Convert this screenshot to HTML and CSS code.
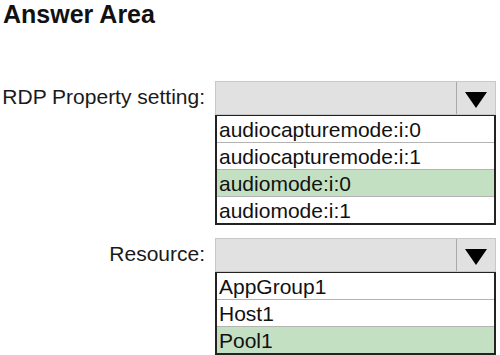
FILE: index.html
```html
<!DOCTYPE html>
<html lang="en">
  <head>
    <meta charset="UTF-8" />
    <title>Answer Area</title>
    <link rel="stylesheet" href="styles.css">
  </head>
  <body>
    <h2 class="title">Answer Area</h2>

    <div class="form">
      <!-- RDP property -->
      <div class="label">RDP Property setting:</div>
      <div class="picker">
        <div class="select">
          <span class="value"></span>
          <span class="arrow">
            <svg width="22" height="16" viewBox="0 0 22 16"><polygon points="0,0 22,0 11,16" fill="#000" /></svg>
          </span>
        </div>
        <ul class="options">
          <li>audiocapturemode:i:0</li>
          <li>audiocapturemode:i:1</li>
          <li class="picked">audiomode:i:0</li>
          <li>audiomode:i:1</li>
        </ul>
      </div>

      <!-- Resource -->
      <div class="label">Resource:</div>
      <div class="picker">
        <div class="select">
          <span class="value"></span>
          <span class="arrow">
            <svg width="22" height="16" viewBox="0 0 22 16"><polygon points="0,0 22,0 11,16" fill="#000" /></svg>
          </span>
        </div>
        <ul class="options">
          <li>AppGroup1</li>
          <li>Host1</li>
          <li class="picked">Pool1</li>
        </ul>
      </div>
    </div>
  </body>
</html>
```

FILE: styles.css
```css
body {
  margin: 0;
  font-family: "Liberation Sans", Arial, sans-serif;
  color: #111;
  background: #fff;
}
.title {
  margin: 0;
  padding-left: 3px;
  font-size: 25px;
  font-weight: bold;
  line-height: 29px;
}
.form {
  display: grid;
  grid-template-columns: 205px 281px;
  column-gap: 10px;
  row-gap: 13px;
  margin-top: 52px;
}
.label {
  text-align: right;
  font-size: 21px;
  line-height: 31px;
  color: #1a1a1a;
}
.select {
  display: flex;
  height: 34px;
  box-sizing: border-box;
  background: #e1e1e1;
  border: 1px solid #c8c8c8;
}
.value {
  flex: 1;
}
.arrow {
  width: 39px;
  border-left: 1px solid #a9a9a9;
  display: flex;
  justify-content: center;
  padding-top: 10px;
  box-sizing: border-box;
}
.options {
  list-style: none;
  margin: 0;
  padding: 0;
  border: 2px solid #222;
  border-top-width: 1px;
}
.options li {
  height: 26px;
  padding: 2px 0 0 2px;
  box-sizing: border-box;
  font-size: 21px;
  line-height: 24px;
  color: #111;
  white-space: nowrap;
}
.options li + li {
  height: 27px;
  border-top: 1px solid #b4b4b4;
}
.options li.picked {
  background: #c3e0c3;
}
```
